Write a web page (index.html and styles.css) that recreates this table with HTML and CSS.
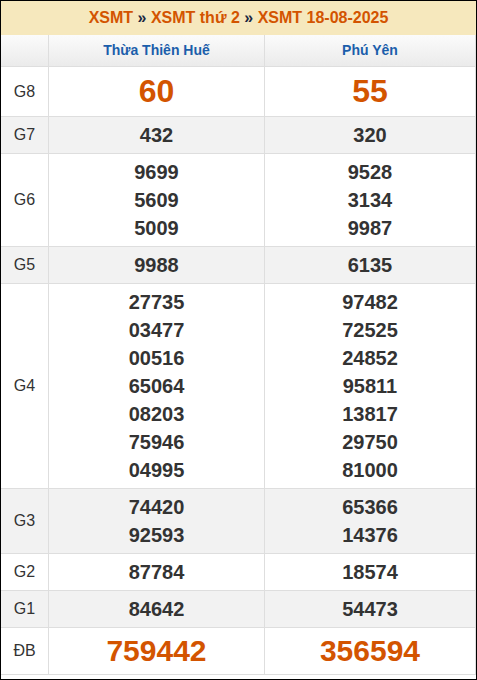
FILE: index.html
```html
<!DOCTYPE html>
<html lang="vi">
<head>
<meta charset="utf-8">
<title>XSMT 18-08-2025</title>
<link rel="stylesheet" href="styles.css">
</head>
<body>
<div class="box">
  <div class="title"><span class="lnk">XSMT</span> <span class="sep">»</span> <span class="lnk">XSMT thứ 2</span> <span class="sep">»</span> <span class="lnk">XSMT 18-08-2025</span></div>
  <div class="row head">
    <div class="cell"></div>
    <div class="cell prov">Thừa Thiên Huế</div>
    <div class="cell prov">Phú Yên</div>
  </div>
  <div class="row">
    <div class="cell lbl">G8</div>
    <div class="cell"><div class="num g8">60</div></div>
    <div class="cell"><div class="num g8">55</div></div>
  </div>
  <div class="row alt">
    <div class="cell lbl">G7</div>
    <div class="cell"><div class="num">432</div></div>
    <div class="cell"><div class="num">320</div></div>
  </div>
  <div class="row">
    <div class="cell lbl">G6</div>
    <div class="cell"><div class="num">9699</div><div class="num">5609</div><div class="num">5009</div></div>
    <div class="cell"><div class="num">9528</div><div class="num">3134</div><div class="num">9987</div></div>
  </div>
  <div class="row alt">
    <div class="cell lbl">G5</div>
    <div class="cell"><div class="num">9988</div></div>
    <div class="cell"><div class="num">6135</div></div>
  </div>
  <div class="row">
    <div class="cell lbl">G4</div>
    <div class="cell"><div class="num">27735</div><div class="num">03477</div><div class="num">00516</div><div class="num">65064</div><div class="num">08203</div><div class="num">75946</div><div class="num">04995</div></div>
    <div class="cell"><div class="num">97482</div><div class="num">72525</div><div class="num">24852</div><div class="num">95811</div><div class="num">13817</div><div class="num">29750</div><div class="num">81000</div></div>
  </div>
  <div class="row alt">
    <div class="cell lbl">G3</div>
    <div class="cell"><div class="num">74420</div><div class="num">92593</div></div>
    <div class="cell"><div class="num">65366</div><div class="num">14376</div></div>
  </div>
  <div class="row">
    <div class="cell lbl">G2</div>
    <div class="cell"><div class="num">87784</div></div>
    <div class="cell"><div class="num">18574</div></div>
  </div>
  <div class="row alt">
    <div class="cell lbl">G1</div>
    <div class="cell"><div class="num">84642</div></div>
    <div class="cell"><div class="num">54473</div></div>
  </div>
  <div class="row">
    <div class="cell lbl">ĐB</div>
    <div class="cell"><div class="num db">759442</div></div>
    <div class="cell"><div class="num db">356594</div></div>
  </div>
</div>
</body>
</html>
```
FILE: styles.css
```css
html, body {
  margin: 0;
  padding: 0;
  background: #fff;
}
body {
  font-family: "Liberation Sans", Arial, sans-serif;
  color: #333;
}
.box {
  width: 477px;
  box-sizing: border-box;
  border: 1px solid #000;
  padding-bottom: 4px;
  background: #fff;
}
.title {
  height: 34px;
  line-height: 34px;
  background: #f6e8bd;
  text-align: center;
  font-size: 16px;
  font-weight: bold;
}
.lnk {
  color: #d35400;
}
.sep {
  color: #1a2740;
}
.row {
  display: grid;
  grid-template-columns: 48px 216px 211px;
}
.row.alt {
  background: #f2f2f2;
}
.cell {
  box-sizing: border-box;
  border-right: 1px solid #dedede;
  border-bottom: 1px solid #dedede;
  padding: 4px 0;
  text-align: center;
  display: flex;
  flex-direction: column;
  justify-content: center;
}
.head .cell {
  height: 32px;
  padding: 0;
  background: linear-gradient(#fbfbfb, #ebebeb);
}
.prov {
  font-size: 14px;
  font-weight: bold;
  color: #1b5eab;
  line-height: 31px;
}
.lbl {
  font-size: 16px;
  color: #333;
}
.num {
  font-size: 20px;
  font-weight: bold;
  line-height: 28px;
  color: #333;
}
.num.g8 {
  font-size: 32px;
  line-height: 41px;
  color: #d35400;
}
.num.db {
  font-size: 30px;
  line-height: 38px;
  color: #d35400;
}
```
